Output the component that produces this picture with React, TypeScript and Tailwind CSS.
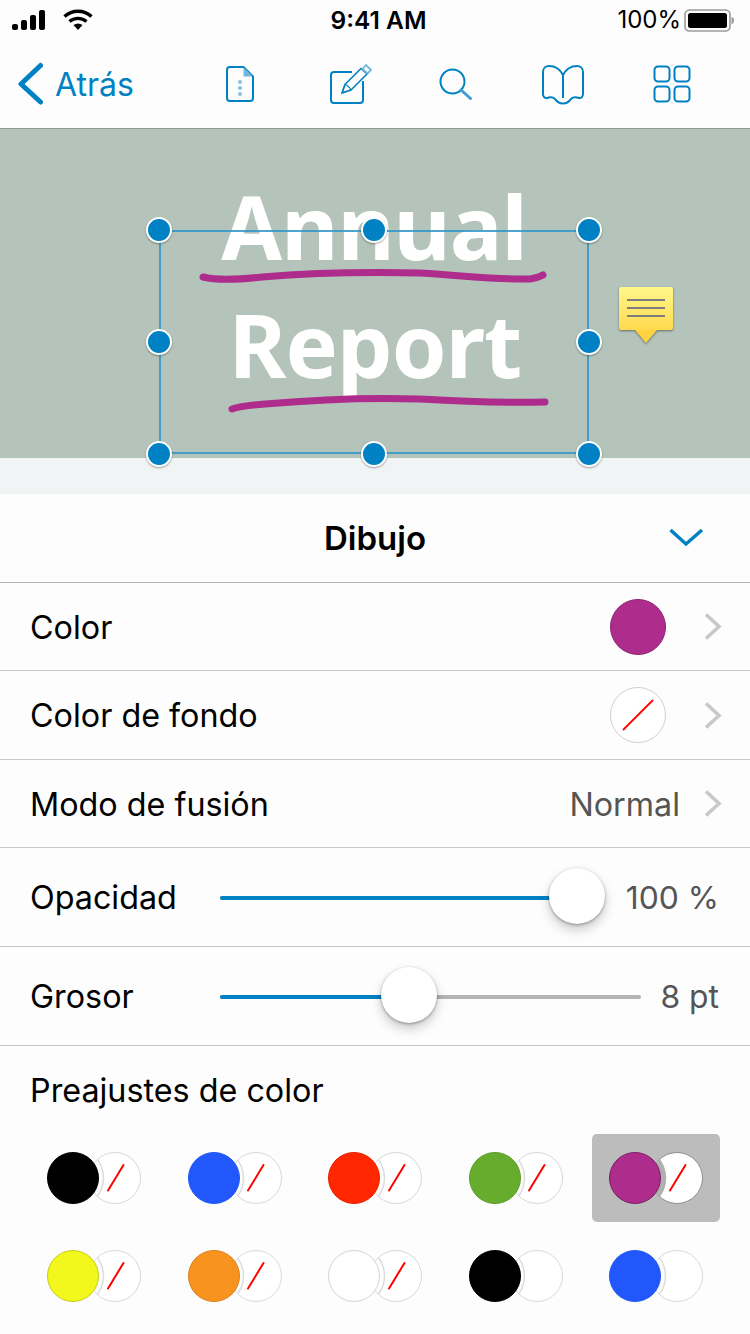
const blue = "#0081c3"

const handles = [
  { x: 159, y: 230 },
  { x: 374, y: 230 },
  { x: 589, y: 230 },
  { x: 159, y: 342 },
  { x: 589, y: 342 },
  { x: 159, y: 454 },
  { x: 374, y: 454 },
  { x: 589, y: 454 },
]

const presets = [
  [
    { color: "#000000", edge: "#000000", slash: true },
    { color: "#2157fb", edge: "#2157fb", slash: true },
    { color: "#ff2600", edge: "#e62200", slash: true },
    { color: "#67ad2d", edge: "#5c9c28", slash: true },
    { color: "#ae2c8c", edge: "#7a1f62", slash: true, selected: true },
  ],
  [
    { color: "#f3f81c", edge: "#c8cc18", slash: true },
    { color: "#f7931e", edge: "#d9821a", slash: true },
    { color: "#ffffff", edge: "#d4d4d4", slash: true },
    { color: "#000000", edge: "#000000", slash: false },
    { color: "#2157fb", edge: "#2157fb", slash: false },
  ],
]

function Chevron() {
  return (
    <svg viewBox="703 613 19 29" className="w-[19px] h-[29px] shrink-0">
      <path d="M706 615.5 L719 627.5 L706 639.5" fill="none" stroke="#c7c7cc" strokeWidth="3.6" />
    </svg>
  )
}

function StatusBar() {
  return (
    <div className="relative h-10 flex items-center pl-3 pr-4 text-black">
      <svg viewBox="12 9 34 22" className="w-[34px] h-[22px]">
        <rect x="12" y="24" width="6" height="6" rx="2" />
        <rect x="21" y="20" width="6" height="10" rx="2" />
        <rect x="30" y="15" width="6" height="15" rx="2" />
        <rect x="39" y="10" width="6" height="20" rx="2" />
      </svg>
      <svg viewBox="62 9 30 22" className="w-[30px] h-[22px] ml-[17px]">
        <path d="M63.5 16.5 A20 20 0 0 1 90.5 16.5" fill="none" stroke="#000" strokeWidth="3.4" />
        <path d="M68.5 21.5 A13 13 0 0 1 85.5 21.5" fill="none" stroke="#000" strokeWidth="3.4" />
        <path d="M72.5 25 A8 8 0 0 1 81.5 25 L77 30 Z" />
      </svg>
      <span className="absolute left-[7px] right-0 text-center text-[24.5px] font-semibold leading-none">9:41 AM</span>
      <span className="ml-auto text-[24px] leading-none">100%</span>
      <svg viewBox="686 9 50 23" className="w-[50px] h-[23px] ml-[3px]">
        <rect x="687" y="10" width="45" height="21" rx="4.5" fill="none" stroke="#9a9a9a" strokeWidth="1.6" />
        <rect x="690" y="13" width="39" height="15" rx="2.5" fill="#000" />
        <path d="M733.5 17 C735 17 736 18.5 736 20.5 C736 22.5 735 24 733.5 24 Z" fill="#9a9a9a" />
      </svg>
    </div>
  )
}

function NavBar() {
  return (
    <div className="h-[88px] flex items-center pl-[17px] text-[#0081c3]">
      <svg viewBox="17 62 26 44" className="w-[26px] h-[44px]">
        <path d="M40.5 65.5 L21 84 L40.5 102" fill="none" stroke={blue} strokeWidth="5" strokeLinecap="round" strokeLinejoin="round" />
      </svg>
      <span className="ml-3 text-[32px] leading-none w-[78px] pt-[2px]">Atrás</span>

      <svg viewBox="225 64 31 38" className="w-[31px] h-[38px] ml-[92px]">
        <path d="M243.5 66 H230 a3 3 0 0 0 -3 3 V97 a3 3 0 0 0 3 3 H250 a3 3 0 0 0 3 -3 V75.5 Z" fill="none" stroke={blue} strokeWidth="2" strokeLinejoin="round" />
        <path d="M243.5 66 L253 75.5 H243.5 Z" fill="#6fb6dd" />
        <circle cx="240" cy="81" r="2" fill="#86c2e2" />
        <circle cx="240" cy="87" r="2" fill="#86c2e2" />
        <circle cx="240" cy="93" r="2" fill="#86c2e2" />
      </svg>

      <svg viewBox="329 60 44 43" className="w-[44px] h-[43px] ml-[73px]">
        <path d="M352 69 H334 a3 3 0 0 0 -3 3 V97 a3 3 0 0 0 3 3 H360 a3 3 0 0 0 3 -3 V78" fill="none" stroke={blue} strokeWidth="2" />
        <path d="M342 90 L345 81.5 L361 65.5 L367 71 L351 87 Z" fill="none" stroke={blue} strokeWidth="1.6" strokeLinejoin="round" />
        <path d="M342 90 L345 81.5 C347 82 349.5 84.5 351 87 Z" fill="none" stroke={blue} strokeWidth="1.2" />
        <path d="M362.5 66 L366 62 L371 67 L367.5 70.5 Z" fill="none" stroke="#6fb6dd" strokeWidth="1.8" />
      </svg>

      <svg viewBox="438 65 35 35" className="w-[35px] h-[35px] ml-[65px]">
        <circle cx="452.5" cy="79.5" r="12" fill="none" stroke={blue} strokeWidth="2" />
        <path d="M461 88 L470.5 96.5" fill="none" stroke="#3d9ed0" strokeWidth="3" strokeLinecap="round" />
      </svg>

      <svg viewBox="541 62 44 43" className="w-[44px] h-[43px] ml-[68px]">
        <path
          d="M563 74 C560 68 555 65 549 65 C545.5 65 543 67.5 543 71 V93 C543 96 545 97.5 547 97 C550 96 553 96 555 98 C556.5 100 558 102.5 563 102.5 C568 102.5 569.5 100 571 98 C573 96 576 96 579 97 C581 97.5 583 96 583 93 V71 C583 67.5 580.5 65 577 65 C571 65 566 68 563 74 Z"
          fill="none"
          stroke={blue}
          strokeWidth="2"
        />
        <path d="M563 74 V97" fill="none" stroke={blue} strokeWidth="2" />
      </svg>

      <svg viewBox="653 63 38 38" className="w-[38px] h-[38px] ml-[68px]">
        <rect x="654.5" y="64.5" width="15" height="15" rx="3.5" fill="none" stroke={blue} strokeWidth="2" />
        <rect x="674.5" y="64.5" width="15" height="15" rx="3.5" fill="none" stroke={blue} strokeWidth="2" />
        <rect x="654.5" y="84.5" width="15" height="15" rx="3.5" fill="none" stroke={blue} strokeWidth="2" />
        <rect x="674.5" y="84.5" width="15" height="15" rx="3.5" fill="none" stroke={blue} strokeWidth="2" />
      </svg>
    </div>
  )
}

function Canvas() {
  return (
    <div className="relative h-[329px] bg-[#b5c4bb] flex flex-col items-center pt-[38px]">
      <div className="font-['Noto_Sans',sans-serif] font-bold text-white text-[88px] leading-[118px] text-center tracking-[-1px]">
        <div className="-ml-[2px]">Annual</div>
        <div>Report</div>
      </div>

      {/* pen strokes, coords are the canvas box */}
      <svg viewBox="0 129 750 329" className="absolute inset-0 w-[750px] h-[329px]">
        <path
          d="M203 277 C215 280 235 280 262 277 C310 273 370 272 420 273 C470 276 500 280 530 279 C538 278 541 276 543 275"
          fill="none"
          stroke="#ae2c8c"
          strokeWidth="7"
          strokeLinecap="round"
        />
        <path
          d="M232 409 C240 406 250 405 265 404 C310 400 360 397 420 399 C470 402 510 403 545 402"
          fill="none"
          stroke="#ae2c8c"
          strokeWidth="7"
          strokeLinecap="round"
        />
      </svg>

      {/* selection box */}
      <div className="absolute left-[159px] top-[101px] w-[430px] h-[224px] border-2 border-[#2f96c8]/85" />
      {handles.map((h) => (
        <div
          key={`${h.x}-${h.y}`}
          className="absolute w-[26px] h-[26px] rounded-full bg-[#0081c3] border-2 border-white shadow-[0_1px_2px_rgba(0,0,0,0.35)] z-10"
          style={{ left: h.x - 13, top: h.y - 129 - 13 }}
        />
      ))}

      {/* note */}
      <div className="absolute left-[619px] top-[158px] w-[54px] drop-shadow-[0_1px_1px_rgba(0,0,0,0.45)]">
        <div className="h-[43px] rounded-[2px] bg-gradient-to-b from-[#fff78a] to-[#ffd94e] flex flex-col gap-[6px] pt-[12px] px-[8px]">
          <div className="h-[2px] bg-[#7d7d7d]" />
          <div className="h-[2px] bg-[#7d7d7d]" />
          <div className="h-[2px] bg-[#7d7d7d]" />
        </div>
        <svg viewBox="0 0 22 14" className="w-[22px] h-[14px] mx-auto">
          <path d="M0 0 H22 L11 13 Z" fill="#ffd23f" />
        </svg>
      </div>
    </div>
  )
}

function Slider({ label, value, fill, gap }: { label: string; value: string; fill: string; gap: string }) {
  return (
    <div className="flex items-center pl-[30px] pr-[31px] h-full">
      <span className="w-[190px] shrink-0 pt-[2px]">{label}</span>
      <div className="relative flex-1 h-1 rounded-full bg-[#b4b4b4] mt-[2px]">
        <div className="relative h-1 rounded-l-full bg-[#0081c3]" style={{ width: fill }}>
          <div className="absolute -right-[28px] -top-[28px] w-[56px] h-[56px] rounded-full bg-white shadow-[0_6px_12px_rgba(0,0,0,0.2),0_1px_3px_rgba(0,0,0,0.35)]" />
        </div>
      </div>
      <span className={`text-[#555] text-[31.8px] pt-[2px] ${gap}`}>{value}</span>
    </div>
  )
}

function Pair({ color, edge, slash, selected }: { color: string; edge: string; slash: boolean; selected?: boolean }) {
  return (
    <div className={`w-[128px] h-[88px] rounded-[5px] flex items-center justify-center ${selected ? "bg-[#bcbcbc]" : ""}`}>
      <div className="relative w-[94px] h-[52px]">
        <div className={`absolute left-[42px] top-0 w-[52px] h-[52px] rounded-full border-[1.5px] bg-white overflow-hidden ${selected ? "border-[#8f8f8f]" : "border-[#d8d8d8]"}`}>
          {/* crescent cut by the filled circle */}
          <svg viewBox="0 0 52 52" className="absolute -left-[1.5px] -top-[1.5px] w-[52px] h-[52px]">
            <circle cx="-16" cy="26" r="30.5" fill={selected ? "#b0b0b0" : "#fdfdfd"} stroke={selected ? "#b0b0b0" : "#dcdcdc"} strokeWidth="1.5" />
            {slash && <path d="M19 38.5 L34.5 13" stroke="#ff0000" strokeWidth="2" strokeLinecap="round" />}
          </svg>
        </div>
        <div
          className="absolute left-0 top-0 w-[52px] h-[52px] rounded-full border"
          style={{ backgroundColor: color, borderColor: edge }}
        />
      </div>
    </div>
  )
}

export default function App() {
  return (
    <div className="w-[750px] h-[1334px] overflow-hidden bg-[#fdfdfd] font-['Inter',sans-serif] text-[32.3px] text-black">
      <div className="h-[129px] bg-[#fdfdfd] border-b border-[#8d9a92]">
        <StatusBar />
        <NavBar />
      </div>
      <Canvas />
      <div className="h-9 bg-[#f1f4f5]" />

      <div className="h-[89px] border-b border-[#b5b5b5] flex items-center justify-center relative">
        <span className="font-semibold text-[33px] leading-none">Dibujo</span>
        <svg viewBox="667 528 38 20" className="absolute right-[45px] top-[33px] w-[38px] h-[20px]">
          <path d="M670.5 531 L686 545 L702 531" fill="none" stroke={blue} strokeWidth="3.4" />
        </svg>
      </div>

      <div className="h-[88px] border-b border-[#c8c8c8] flex items-center pl-[30px] pr-[28px]">
        <span className="pt-[3px]">Color</span>
        <div className="ml-auto w-[56px] h-[56px] rounded-full bg-[#ae2c8c] border border-[#8f2473]" />
        <div className="ml-[37px] flex"><Chevron /></div>
      </div>

      <div className="h-[89px] border-b border-[#c8c8c8] flex items-center pl-[30px] pr-[28px]">
        <span className="pt-[3px]">Color de fondo</span>
        <div className="relative ml-auto w-[56px] h-[56px] rounded-full bg-white border border-[#cfcfcf]">
          <svg viewBox="0 0 56 56" className="absolute -inset-px w-[56px] h-[56px]">
            <path d="M13 43 L43 13" stroke="#ff0000" strokeWidth="1.8" />
          </svg>
        </div>
        <div className="ml-[37px] flex"><Chevron /></div>
      </div>

      <div className="h-[88px] border-b border-[#c8c8c8] flex items-center pl-[30px] pr-[28px]">
        <span className="pt-[3px]">Modo de fusión</span>
        <span className="ml-auto text-[#555] pt-[3px]">Normal</span>
        <div className="ml-[23px] flex"><Chevron /></div>
      </div>

      <div className="h-[99px] border-b border-[#c8c8c8]">
        <Slider label="Opacidad" value="100 %" fill="357px" gap="ml-[22px]" />
      </div>
      <div className="h-[99px] border-b border-[#c8c8c8]">
        <Slider label="Grosor" value="8 pt" fill="189px" gap="ml-[20px]" />
      </div>

      <div className="pl-[30px] pt-[27px] leading-9">Preajustes de color</div>
      <div className="pl-[30px] pr-[30px] pt-[25px] flex flex-col gap-[10px]">
        {presets.map((row, i) => (
          <div key={i} className="flex justify-between">
            {row.map((p, j) => (
              <Pair key={j} {...p} />
            ))}
          </div>
        ))}
      </div>
    </div>
  )
}
